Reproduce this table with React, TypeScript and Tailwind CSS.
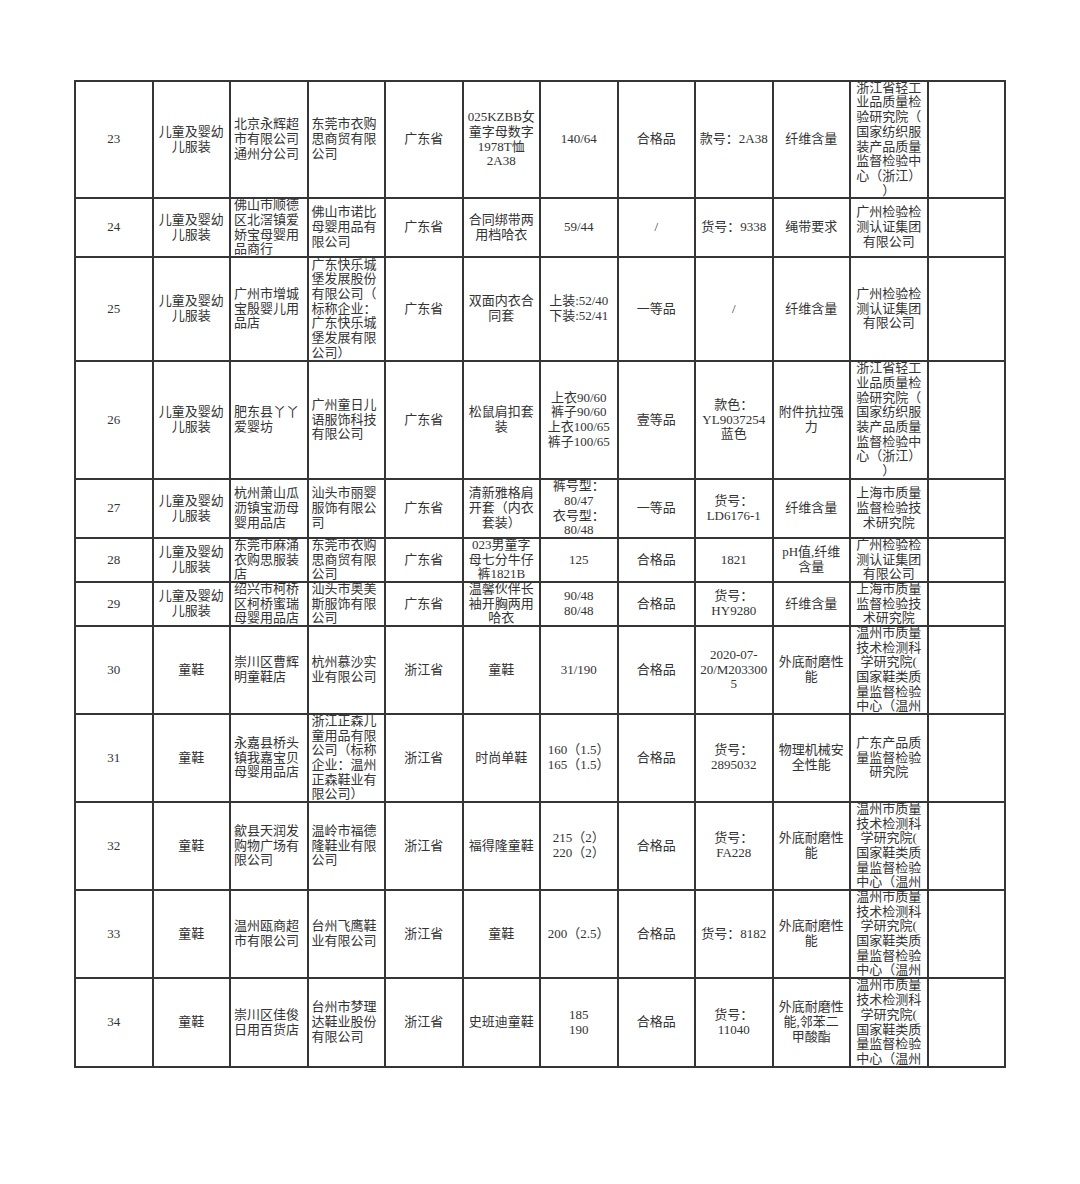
import React from "react";

type Cell = string | string[];

const rows: Cell[][] = [
  [
    "23",
    ["儿童及婴幼", "儿服装"],
    ["北京永辉超", "市有限公司", "通州分公司"],
    ["东莞市衣购", "思商贸有限", "公司"],
    "广东省",
    ["025KZBB女", "童字母数字", "1978T恤", "2A38"],
    "140/64",
    "合格品",
    "款号：2A38",
    "纤维含量",
    ["浙江省轻工", "业品质量检", "验研究院（", "国家纺织服", "装产品质量", "监督检验中", "心（浙江）", "）"],
  ],
  [
    "24",
    ["儿童及婴幼", "儿服装"],
    ["佛山市顺德", "区北滘镇爱", "娇宝母婴用", "品商行"],
    ["佛山市诺比", "母婴用品有", "限公司"],
    "广东省",
    ["合同绑带两", "用档哈衣"],
    "59/44",
    "/",
    "货号：9338",
    "绳带要求",
    ["广州检验检", "测认证集团", "有限公司"],
  ],
  [
    "25",
    ["儿童及婴幼", "儿服装"],
    ["广州市增城", "宝殷婴儿用", "品店"],
    ["广东快乐城", "堡发展股份", "有限公司（", "标称企业：", "广东快乐城", "堡发展有限", "公司）"],
    "广东省",
    ["双面内衣合", "同套"],
    ["上装:52/40", "下装:52/41"],
    "一等品",
    "/",
    "纤维含量",
    ["广州检验检", "测认证集团", "有限公司"],
  ],
  [
    "26",
    ["儿童及婴幼", "儿服装"],
    ["肥东县丫丫", "爱婴坊"],
    ["广州童日儿", "语服饰科技", "有限公司"],
    "广东省",
    ["松鼠肩扣套", "装"],
    ["上衣90/60", "裤子90/60", "上衣100/65", "裤子100/65"],
    "壹等品",
    ["款色：", "YL9037254", "蓝色"],
    ["附件抗拉强", "力"],
    ["浙江省轻工", "业品质量检", "验研究院（", "国家纺织服", "装产品质量", "监督检验中", "心（浙江）", "）"],
  ],
  [
    "27",
    ["儿童及婴幼", "儿服装"],
    ["杭州萧山瓜", "沥镇宝沥母", "婴用品店"],
    ["汕头市丽婴", "服饰有限公", "司"],
    "广东省",
    ["清新雅格肩", "开套（内衣", "套装）"],
    ["裤号型：", "80/47", "衣号型：", "80/48"],
    "一等品",
    ["货号：", "LD6176-1"],
    "纤维含量",
    ["上海市质量", "监督检验技", "术研究院"],
  ],
  [
    "28",
    ["儿童及婴幼", "儿服装"],
    ["东莞市麻涌", "衣购思服装", "店"],
    ["东莞市衣购", "思商贸有限", "公司"],
    "广东省",
    ["023男童字", "母七分牛仔", "裤1821B"],
    "125",
    "合格品",
    "1821",
    ["pH值,纤维", "含量"],
    ["广州检验检", "测认证集团", "有限公司"],
  ],
  [
    "29",
    ["儿童及婴幼", "儿服装"],
    ["绍兴市柯桥", "区柯桥蜜瑞", "母婴用品店"],
    ["汕头市奥美", "斯服饰有限", "公司"],
    "广东省",
    ["温馨伙伴长", "袖开胸两用", "哈衣"],
    ["90/48", "80/48"],
    "合格品",
    ["货号：", "HY9280"],
    "纤维含量",
    ["上海市质量", "监督检验技", "术研究院"],
  ],
  [
    "30",
    "童鞋",
    ["崇川区曹辉", "明童鞋店"],
    ["杭州慕沙实", "业有限公司"],
    "浙江省",
    "童鞋",
    "31/190",
    "合格品",
    ["2020-07-", "20/M203300", "5"],
    ["外底耐磨性", "能"],
    ["温州市质量", "技术检测科", "学研究院(", "国家鞋类质", "量监督检验", "中心（温州"],
  ],
  [
    "31",
    "童鞋",
    ["永嘉县桥头", "镇我嘉宝贝", "母婴用品店"],
    ["浙江正森儿", "童用品有限", "公司（标称", "企业：温州", "正森鞋业有", "限公司）"],
    "浙江省",
    "时尚单鞋",
    ["160（1.5）", "165（1.5）"],
    "合格品",
    ["货号：", "2895032"],
    ["物理机械安", "全性能"],
    ["广东产品质", "量监督检验", "研究院"],
  ],
  [
    "32",
    "童鞋",
    ["歙县天润发", "购物广场有", "限公司"],
    ["温岭市福德", "隆鞋业有限", "公司"],
    "浙江省",
    "福得隆童鞋",
    ["215（2）", "220（2）"],
    "合格品",
    ["货号：", "FA228"],
    ["外底耐磨性", "能"],
    ["温州市质量", "技术检测科", "学研究院(", "国家鞋类质", "量监督检验", "中心（温州"],
  ],
  [
    "33",
    "童鞋",
    ["温州瓯商超", "市有限公司"],
    ["台州飞鹰鞋", "业有限公司"],
    "浙江省",
    "童鞋",
    "200（2.5）",
    "合格品",
    "货号：8182",
    ["外底耐磨性", "能"],
    ["温州市质量", "技术检测科", "学研究院(", "国家鞋类质", "量监督检验", "中心（温州"],
  ],
  [
    "34",
    "童鞋",
    ["崇川区佳俊", "日用百货店"],
    ["台州市梦理", "达鞋业股份", "有限公司"],
    "浙江省",
    "史班迪童鞋",
    ["185", "190"],
    "合格品",
    ["货号：", "11040"],
    ["外底耐磨性", "能,邻苯二", "甲酸酯"],
    ["温州市质量", "技术检测科", "学研究院(", "国家鞋类质", "量监督检验", "中心（温州"],
  ],
];

// columns 3 and 4 (store / maker names) sit left aligned, the rest centred
const leftCols = [2, 3];

function TableCell({ value, col }: { value: Cell | undefined; col: number }) {
  const lines = value === undefined ? [] : Array.isArray(value) ? value : [value];
  const left = leftCols.includes(col);
  return (
    <div
      className={`flex flex-col justify-center overflow-hidden border-r-2 border-b-2 border-[#353535] ${
        left ? "items-start pl-[3px]" : "items-center"
      }`}
    >
      {lines.map((line, i) => (
        <div key={i} className="whitespace-nowrap">
          {line}
        </div>
      ))}
    </div>
  );
}

export default function App() {
  return (
    <div className="min-h-[1184px] bg-white pt-[80px]">
      <div
        className="mx-auto grid w-[932px] grid-cols-12 grid-rows-[117px_59px_104px_118px_59px_44px_44px_88px_88px_88px_88px_89px] border-l-2 border-t-2 border-[#353535] text-[13px] leading-[14.7px] text-[#333]"
        style={{ fontFamily: '"Liberation Serif", "Noto Sans CJK SC", serif' }}
      >
        {rows.map((row, r) =>
          Array.from({ length: 12 }).map((_, c) => <TableCell key={`${r}-${c}`} value={row[c]} col={c} />)
        )}
      </div>
    </div>
  );
}
